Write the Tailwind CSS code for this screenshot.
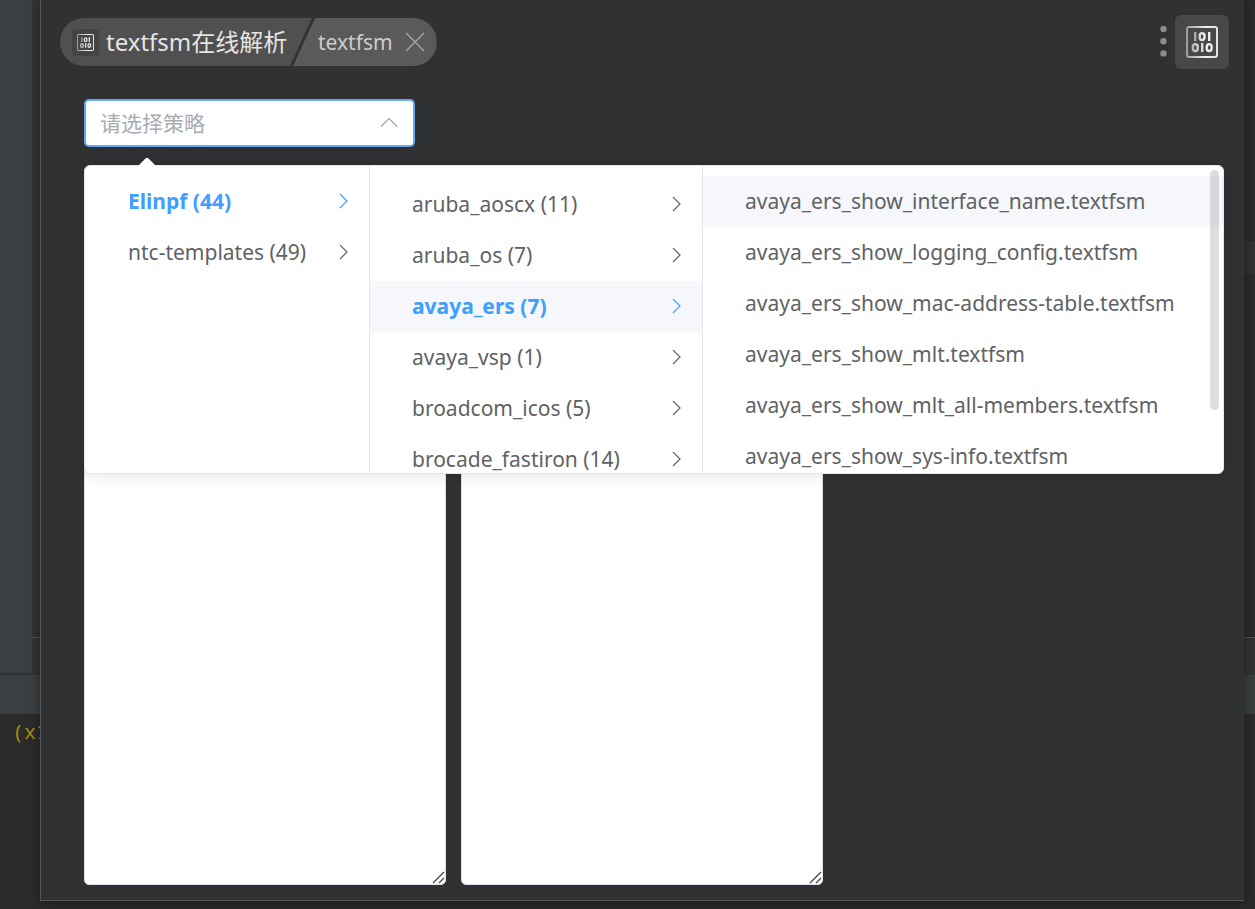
<!DOCTYPE html>
<html lang="zh-CN">
<head>
<meta charset="utf-8">
<meta name="viewport" content="width=device-width, initial-scale=1">
<title>textfsm在线解析</title>
<script src="https://cdn.jsdelivr.net/npm/@tailwindcss/browser@4"></script>
</head>
<body class="flex h-screen overflow-hidden bg-[#2b2b2b] font-['Noto_Sans','Noto_Sans_CJK_SC',sans-serif] text-[21px] text-[#606266]">
<svg class="absolute size-0" aria-hidden="true">
  <defs>
    <linearGradient id="shine" gradientUnits="userSpaceOnUse" x1="0" y1="0" x2="32" y2="0"><stop offset="0" stop-color="#999"/><stop offset=".6" stop-color="#f0f0f0"/><stop offset="1" stop-color="#e0e0e0"/></linearGradient>
  </defs>
  <symbol id="binary" viewBox="0 0 32 32">
    <rect x="1" y="1" width="30" height="30" rx="2" fill="none" stroke="url(#shine)" stroke-width="2"/>
    <g fill="none" stroke="url(#shine)" stroke-width="2.400">
      <rect x="8" y="6" width="2.400" height="9" fill="#aaa" stroke="none"/>
      <rect x="13.700" y="7.200" width="4.800" height="6.800" rx="2.400"/>
      <rect x="22" y="6" width="2.400" height="9" fill="#eee" stroke="none"/>
      <rect x="6.900" y="18.200" width="4.800" height="6.800" rx="2.400"/>
      <rect x="15" y="17" width="2.400" height="9" fill="#ddd" stroke="none"/>
      <rect x="20.800" y="18.200" width="4.800" height="6.800" rx="2.400"/>
    </g>
  </symbol>
  <symbol id="chevron" viewBox="0 0 10 16"><path d="M1 0l7 7-7 7" fill="none" stroke="currentColor" stroke-width="1.200"/></symbol>
</svg>

<aside class="flex w-10 shrink-0 flex-col">
  <div class="flex h-[673px] shrink-0 bg-[#313335]">
    <div class="w-8 bg-[#3c3f41]"></div>
    <div class="mt-[637px] h-px flex-1 bg-[#555]"></div>
  </div>
  <div class="h-[41px] shrink-0 border-t-2 border-[#303234] bg-[#3c3f41]"></div>
  <div class="pt-[3px] pl-3 font-['Noto_Sans_Mono','DejaVu_Sans_Mono',monospace] text-[20px] text-[#a68a0d]">(x1</div>
</aside>

<main class="relative z-10 mb-2 flex min-w-0 flex-1 flex-col border-b border-l border-[#56585a] bg-[#303133] pl-[19px] shadow-[0_2px_12px_rgba(0,0,0,0.4)]">
  <header class="flex h-[84px] shrink-0 items-center justify-between pr-[15px]">
    <div class="flex h-12 overflow-hidden rounded-full text-[#e4e4e4]">
      <div class="flex w-[252px] items-center gap-[7px] bg-[#505050] pl-3 text-[24px] whitespace-nowrap [clip-path:polygon(0_0,100%_0,calc(100%-22px)_100%,0_100%)]">
        <span class="flex size-[27px] items-center justify-center rounded-sm bg-[#444]"><svg class="size-[17px]"><use href="#binary"/></svg></span>
        <h1>textfsm在线解析</h1>
      </div>
      <div class="-ml-[19px] flex items-center gap-3 bg-[#5a5a5a] pr-3 pl-[25px] text-[#ccc] [clip-path:polygon(22px_0,100%_0,100%_100%,0_100%)]">
        <span class="pt-px">textfsm</span>
        <button aria-label="关闭" class="text-[#aaa]"><svg class="size-5" viewBox="0 0 20 20" fill="none" stroke="currentColor" stroke-width="1.300"><path d="M1 1l18 18M19 1L1 19"/></svg></button>
      </div>
    </div>
    <div class="flex items-center gap-2">
      <button aria-label="更多"><svg class="h-8 w-[7px]" viewBox="0 0 7 32" fill="#8c8c8c"><circle cx="3.500" cy="3" r="3.200"/><circle cx="3.500" cy="15.200" r="3.200"/><circle cx="3.500" cy="27.400" r="3.200"/></svg></button>
      <button aria-label="textfsm" class="flex size-[54px] items-center justify-center rounded-md bg-[#484848]"><svg class="size-8"><use href="#binary"/></svg></button>
    </div>
  </header>

  <section class="relative flex flex-1 flex-col gap-6 pt-[15px] pr-5 pb-[15px] pl-6">
    <div class="flex h-12 w-[331px] items-center rounded-[5px] border-2 border-[#66a9f2] bg-white px-[15px] pl-[14px]">
      <input aria-label="请选择策略" placeholder="请选择策略" readonly class="min-w-0 flex-1 bg-transparent pt-px outline-none placeholder:text-[#a8abb2]">
      <svg class="h-[10px] w-[18px]" viewBox="0 0 18 10" fill="none" stroke="#a8abb2" stroke-width="1.300"><path d="M1 8.500l8-8 8 8"/></svg>
    </div>

    <div class="flex flex-1 gap-[15px]">
      <div class="relative w-[362px]"><textarea aria-label="输入" class="block h-full w-full resize-none rounded-[5px] border border-[#dcdfe6] bg-white p-2"></textarea><svg class="absolute right-0 bottom-0 size-[14px]" viewBox="0 0 14 14" stroke="#444" stroke-width="1.300"><path d="M1 12L12 1M7 12l5-5"/></svg></div>
      <div class="relative w-[362px]"><textarea aria-label="结果" class="block h-full w-full resize-none rounded-[5px] border border-[#dcdfe6] bg-white p-2"></textarea><svg class="absolute right-0 bottom-0 size-[14px]" viewBox="0 0 14 14" stroke="#444" stroke-width="1.300"><path d="M1 12L12 1M7 12l5-5"/></svg></div>
    </div>

    <div class="absolute top-[81px] right-5 left-6 h-[309px] rounded-md border border-[#e4e7ed] bg-white shadow-[0_0_18px_rgba(0,0,0,0.12)]">
      <svg class="absolute -top-[9px] left-[52px] h-[10px] w-5" viewBox="0 0 20 10" fill="#fff"><path d="M0 10L8.500 1.500Q10 0 11.500 1.500L20 10z"/></svg>
      <div class="flex h-full overflow-hidden rounded-md">
        <ul class="w-[285px] shrink-0 border-r border-[#e4e7ed] pt-[10px]">
          <li><button class="flex h-[51px] w-full items-center justify-between pr-5 pl-[43px] font-bold text-[#409eff]">Elinpf (44)<svg class="h-4 w-[10px]"><use href="#chevron"/></svg></button></li>
          <li><button class="flex h-[51px] w-full items-center justify-between pr-5 pl-[43px]">ntc-templates (49)<svg class="h-4 w-[10px]"><use href="#chevron"/></svg></button></li>
        </ul>
        <ul class="w-[333px] shrink-0 border-r border-[#e4e7ed] pt-[13px]">
          <li><button class="flex h-[51px] w-full items-center justify-between pr-5 pl-[42px]">aruba_aoscx (11)<svg class="h-4 w-[10px]"><use href="#chevron"/></svg></button></li>
          <li><button class="flex h-[51px] w-full items-center justify-between pr-5 pl-[42px]">aruba_os (7)<svg class="h-4 w-[10px]"><use href="#chevron"/></svg></button></li>
          <li><button class="flex h-[51px] w-full items-center justify-between bg-[#f5f7fa] pr-5 pl-[42px] font-bold text-[#409eff]">avaya_ers (7)<svg class="h-4 w-[10px]"><use href="#chevron"/></svg></button></li>
          <li><button class="flex h-[51px] w-full items-center justify-between pr-5 pl-[42px]">avaya_vsp (1)<svg class="h-4 w-[10px]"><use href="#chevron"/></svg></button></li>
          <li><button class="flex h-[51px] w-full items-center justify-between pr-5 pl-[42px]">broadcom_icos (5)<svg class="h-4 w-[10px]"><use href="#chevron"/></svg></button></li>
          <li><button class="flex h-[51px] w-full items-center justify-between pr-5 pl-[42px]">brocade_fastiron (14)<svg class="h-4 w-[10px]"><use href="#chevron"/></svg></button></li>
        </ul>
        <ul class="relative min-w-0 flex-1 pt-[10px] whitespace-nowrap">
          <li><button class="flex h-[51px] w-full items-center bg-[#f5f7fa] pl-[42px]">avaya_ers_show_interface_name.textfsm</button></li>
          <li><button class="flex h-[51px] w-full items-center pl-[42px]">avaya_ers_show_logging_config.textfsm</button></li>
          <li><button class="flex h-[51px] w-full items-center pl-[42px]">avaya_ers_show_mac-address-table.textfsm</button></li>
          <li><button class="flex h-[51px] w-full items-center pl-[42px]">avaya_ers_show_mlt.textfsm</button></li>
          <li><button class="flex h-[51px] w-full items-center pl-[42px]">avaya_ers_show_mlt_all-members.textfsm</button></li>
          <li><button class="flex h-[51px] w-full items-center pl-[42px]">avaya_ers_show_sys-info.textfsm</button></li>
          <li aria-hidden="true" class="absolute top-1 right-1 h-60 w-[9px] rounded-full bg-[#909399]/30"></li>
        </ul>
      </div>
    </div>
  </section>
</main>

<aside class="flex w-[11px] shrink-0 flex-col">
  <div class="mt-[241px] h-[33px] bg-[#323232]"></div>
  <div class="mt-[363px] h-[38px] border-t border-[#555] bg-[#313335]"></div>
  <div class="h-[39px] bg-[#3c3f41]"></div>
</aside>
</body>
</html>
